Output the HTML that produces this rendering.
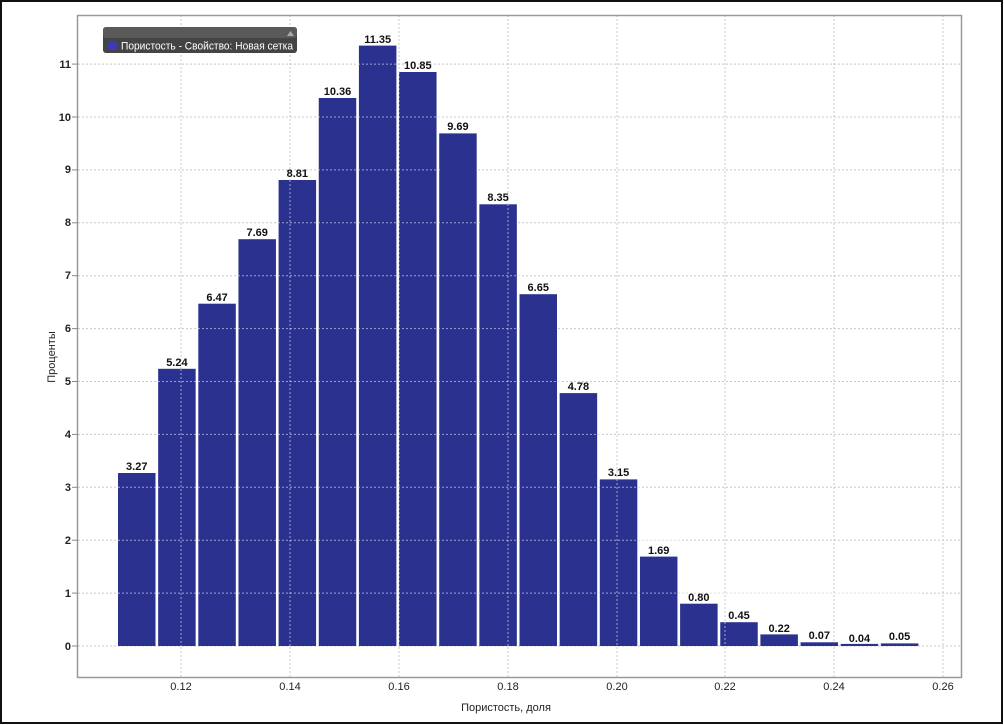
<!DOCTYPE html>
<html><head><meta charset="utf-8"><style>
html,body{margin:0;padding:0;background:#fff;}
svg{display:block;font-family:"Liberation Sans",Arial,sans-serif;}
</style></head><body>
<svg width="1004" height="725" viewBox="0 0 1004 725" xmlns="http://www.w3.org/2000/svg">
<rect x="1" y="1" width="1001" height="722" fill="#fff" stroke="#111" stroke-width="2"/>
<g stroke="#c8c8c8" stroke-width="1" stroke-dasharray="2,2" fill="none">
<line x1="78" x2="961" y1="646" y2="646"/><line x1="78" x2="961" y1="593.1" y2="593.1"/><line x1="78" x2="961" y1="540.2" y2="540.2"/><line x1="78" x2="961" y1="487.3" y2="487.3"/><line x1="78" x2="961" y1="434.4" y2="434.4"/><line x1="78" x2="961" y1="381.5" y2="381.5"/><line x1="78" x2="961" y1="328.6" y2="328.6"/><line x1="78" x2="961" y1="275.7" y2="275.7"/><line x1="78" x2="961" y1="222.8" y2="222.8"/><line x1="78" x2="961" y1="169.9" y2="169.9"/><line x1="78" x2="961" y1="117" y2="117"/><line x1="78" x2="961" y1="64.1" y2="64.1"/>
<line y1="15" y2="677" x1="181" x2="181"/><line y1="15" y2="677" x1="290" x2="290"/><line y1="15" y2="677" x1="399" x2="399"/><line y1="15" y2="677" x1="508" x2="508"/><line y1="15" y2="677" x1="617" x2="617"/><line y1="15" y2="677" x1="725" x2="725"/><line y1="15" y2="677" x1="834" x2="834"/><line y1="15" y2="677" x1="943" x2="943"/>
</g>
<g fill="#2b318e">
<rect x="118" y="473" width="37.5" height="173"/>
<rect x="158.15" y="368.8" width="37.5" height="277.2"/>
<rect x="198.3" y="303.7" width="37.5" height="342.3"/>
<rect x="238.45" y="239.2" width="37.5" height="406.8"/>
<rect x="278.6" y="180" width="37.5" height="466"/>
<rect x="318.75" y="98" width="37.5" height="548"/>
<rect x="358.9" y="45.6" width="37.5" height="600.4"/>
<rect x="399.05" y="72" width="37.5" height="574"/>
<rect x="439.2" y="133.4" width="37.5" height="512.6"/>
<rect x="479.35" y="204.3" width="37.5" height="441.7"/>
<rect x="519.5" y="294.2" width="37.5" height="351.8"/>
<rect x="559.65" y="393.1" width="37.5" height="252.9"/>
<rect x="599.8" y="479.4" width="37.5" height="166.6"/>
<rect x="639.95" y="556.6" width="37.5" height="89.4"/>
<rect x="680.1" y="603.7" width="37.5" height="42.3"/>
<rect x="720.25" y="622.2" width="37.5" height="23.8"/>
<rect x="760.4" y="634.4" width="37.5" height="11.6"/>
<rect x="800.55" y="642.3" width="37.5" height="3.7"/>
<rect x="840.7" y="643.9" width="37.5" height="2.1"/>
<rect x="880.85" y="643.4" width="37.5" height="2.6"/>
</g>
<g stroke="#fff" stroke-opacity="0.55" stroke-width="1" stroke-dasharray="2,2">
<line x1="118" x2="920" y1="593.1" y2="593.1"/><line x1="118" x2="680" y1="540.2" y2="540.2"/><line x1="118" x2="640" y1="487.3" y2="487.3"/><line x1="158" x2="600" y1="434.4" y2="434.4"/><line x1="158" x2="560" y1="381.5" y2="381.5"/><line x1="198" x2="520" y1="328.6" y2="328.6"/><line x1="238" x2="520" y1="275.7" y2="275.7"/><line x1="278" x2="480" y1="222.8" y2="222.8"/><line x1="318" x2="440" y1="169.9" y2="169.9"/><line x1="318" x2="440" y1="117" y2="117"/><line x1="358" x2="397" y1="64.1" y2="64.1"/>
<line x1="181" x2="181" y1="369" y2="646"/><line x1="290" x2="290" y1="180" y2="646"/><line x1="399" x2="399" y1="72" y2="646"/><line x1="508" x2="508" y1="204" y2="646"/><line x1="617" x2="617" y1="479" y2="646"/><line x1="725" x2="725" y1="622" y2="646"/>
</g>
<rect x="77.5" y="15.5" width="884" height="662" fill="none" stroke="#999" stroke-width="1.5"/>
<g stroke="#888" stroke-width="1">
<line x1="72" x2="78" y1="646" y2="646"/><line x1="72" x2="78" y1="593.1" y2="593.1"/><line x1="72" x2="78" y1="540.2" y2="540.2"/><line x1="72" x2="78" y1="487.3" y2="487.3"/><line x1="72" x2="78" y1="434.4" y2="434.4"/><line x1="72" x2="78" y1="381.5" y2="381.5"/><line x1="72" x2="78" y1="328.6" y2="328.6"/><line x1="72" x2="78" y1="275.7" y2="275.7"/><line x1="72" x2="78" y1="222.8" y2="222.8"/><line x1="72" x2="78" y1="169.9" y2="169.9"/><line x1="72" x2="78" y1="117" y2="117"/><line x1="72" x2="78" y1="64.1" y2="64.1"/>
</g>
<g font-size="11" font-weight="bold" fill="#222" text-anchor="end">
<text x="71" y="650">0</text><text x="71" y="597">1</text><text x="71" y="544">2</text><text x="71" y="491">3</text><text x="71" y="438">4</text><text x="71" y="385">5</text><text x="71" y="332">6</text><text x="71" y="279">7</text><text x="71" y="226">8</text><text x="71" y="173">9</text><text x="71" y="121">10</text><text x="71" y="68">11</text>
</g>
<g font-size="11" fill="#222" text-anchor="middle">
<text x="181" y="690">0.12</text><text x="290" y="690">0.14</text><text x="399" y="690">0.16</text><text x="508" y="690">0.18</text><text x="617" y="690">0.20</text><text x="725" y="690">0.22</text><text x="834" y="690">0.24</text><text x="943" y="690">0.26</text>
<text x="506" y="711">Пористость, доля</text>
<text transform="translate(55,357) rotate(-90)">Проценты</text>
</g>
<g font-size="11" font-weight="bold" fill="#111" text-anchor="middle">
<text x="136.75" y="470">3.27</text><text x="176.9" y="366">5.24</text><text x="217.05" y="301">6.47</text><text x="257.2" y="236">7.69</text><text x="297.35" y="177">8.81</text><text x="337.5" y="95">10.36</text><text x="377.65" y="43">11.35</text><text x="417.8" y="69">10.85</text><text x="457.95" y="130">9.69</text><text x="498.1" y="201">8.35</text><text x="538.25" y="291">6.65</text><text x="578.4" y="390">4.78</text><text x="618.55" y="476">3.15</text><text x="658.7" y="554">1.69</text><text x="698.85" y="601">0.80</text><text x="739" y="619">0.45</text><text x="779.15" y="632">0.22</text><text x="819.3" y="639">0.07</text><text x="859.45" y="642">0.04</text><text x="899.6" y="640">0.05</text>
</g>
<rect x="103" y="27" width="194" height="26" rx="3" fill="#444"/>
<rect x="103" y="27" width="194" height="11" rx="3" fill="#5a5a5a"/>
<path d="M287 36 L290.5 31 L294 36 Z" fill="#aaa"/>
<rect x="108" y="41" width="9" height="9" rx="2" fill="#3a3cb0"/>
<text x="121" y="49.5" font-size="11" fill="#fff" textLength="172" lengthAdjust="spacingAndGlyphs">Пористость - Свойство: Новая сетка</text>
</svg>
</body></html>
